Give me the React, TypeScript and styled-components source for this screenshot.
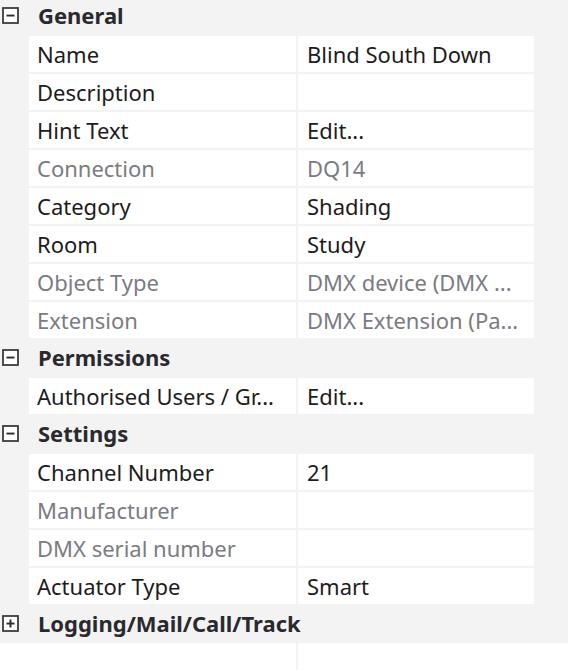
import React from "react";
import styled, { createGlobalStyle } from "styled-components";

const GlobalStyle = createGlobalStyle`
  html, body {
    margin: 0;
    padding: 0;
    background: #ffffff;
  }
  #root {
    min-height: 100vh;
    display: flex;
    flex-direction: column;
  }
`;

const Grid = styled.div`
  flex: 1;
  display: flex;
  flex-direction: column;
  background: #f3f3f3;
  font-family: "Noto Sans", "Open Sans", "Liberation Sans", sans-serif;
  font-size: 22px;
  color: #1c1c1c;
  overflow: hidden;
  /* the list is scrolled down a few pixels */
  margin-top: -4px;
`;

const CategoryRow = styled.div`
  height: 38px;
  display: flex;
  align-items: center;
  padding-left: 2px;
  gap: 19px;
  background: #f3f3f3;
`;

const CategoryTitle = styled.span`
  font-weight: 700;
  color: #2a2a2e;
`;

const PropertyRow = styled.div`
  height: 36px;
  margin-top: 2px;
  display: flex;
  padding-left: 29px;
`;

const Cell = styled.div<{ $disabled?: boolean }>`
  background: #ffffff;
  display: flex;
  align-items: center;
  padding-left: 8px;
  box-sizing: border-box;
  white-space: nowrap;
  overflow: hidden;
  color: ${(p) => (p.$disabled ? "#7b7b82" : "#1c1c1c")};
`;

const NameCell = styled(Cell)`
  width: 267px;
`;

const ValueCell = styled(Cell)`
  width: 236px;
  margin-left: 2px;
  padding-left: 9px;
`;

const Filler = styled.div`
  flex: 1;
  min-height: 28px;
  margin-top: 1px;
  background: #ffffff;
  display: flex;
`;

const FillerName = styled.div`
  width: 296px;
  border-right: 2px solid #f3f3f3;
`;

function Expander({ open }: { open: boolean }) {
  return (
    <svg width="17" height="17" viewBox="0 0 17 17">
      <rect x="1" y="1" width="15" height="15" fill="#ffffff" stroke="#3c3c3c" strokeWidth="1.8" />
      <rect x="4.5" y="7.6" width="8" height="1.9" fill="#2c2c2c" />
      {!open && <rect x="7.55" y="4.5" width="1.9" height="8" fill="#2c2c2c" />}
    </svg>
  );
}

type Prop = { name: string; value: string; disabled?: boolean };
type Category = { title: string; open: boolean; props: Prop[] };

const categories: Category[] = [
  {
    title: "General",
    open: true,
    props: [
      { name: "Name", value: "Blind South Down" },
      { name: "Description", value: "" },
      { name: "Hint Text", value: "Edit..." },
      { name: "Connection", value: "DQ14", disabled: true },
      { name: "Category", value: "Shading" },
      { name: "Room", value: "Study" },
      { name: "Object Type", value: "DMX device (DMX ...", disabled: true },
      { name: "Extension", value: "DMX Extension (Pa...", disabled: true },
    ],
  },
  {
    title: "Permissions",
    open: true,
    props: [{ name: "Authorised Users / Gr...", value: "Edit..." }],
  },
  {
    title: "Settings",
    open: true,
    props: [
      { name: "Channel Number", value: "21" },
      { name: "Manufacturer", value: "", disabled: true },
      { name: "DMX serial number", value: "", disabled: true },
      { name: "Actuator Type", value: "Smart" },
    ],
  },
  { title: "Logging/Mail/Call/Track", open: false, props: [] },
];

export default function App() {
  return (
    <>
      <GlobalStyle />
      <Grid>
        {categories.map((cat) => (
          <React.Fragment key={cat.title}>
            <CategoryRow>
              <Expander open={cat.open} />
              <CategoryTitle>{cat.title}</CategoryTitle>
            </CategoryRow>
            {cat.open &&
              cat.props.map((p) => (
                <PropertyRow key={p.name}>
                  <NameCell $disabled={p.disabled}>{p.name}</NameCell>
                  <ValueCell $disabled={p.disabled}>{p.value}</ValueCell>
                </PropertyRow>
              ))}
          </React.Fragment>
        ))}
        <Filler>
          <FillerName />
        </Filler>
      </Grid>
    </>
  );
}
